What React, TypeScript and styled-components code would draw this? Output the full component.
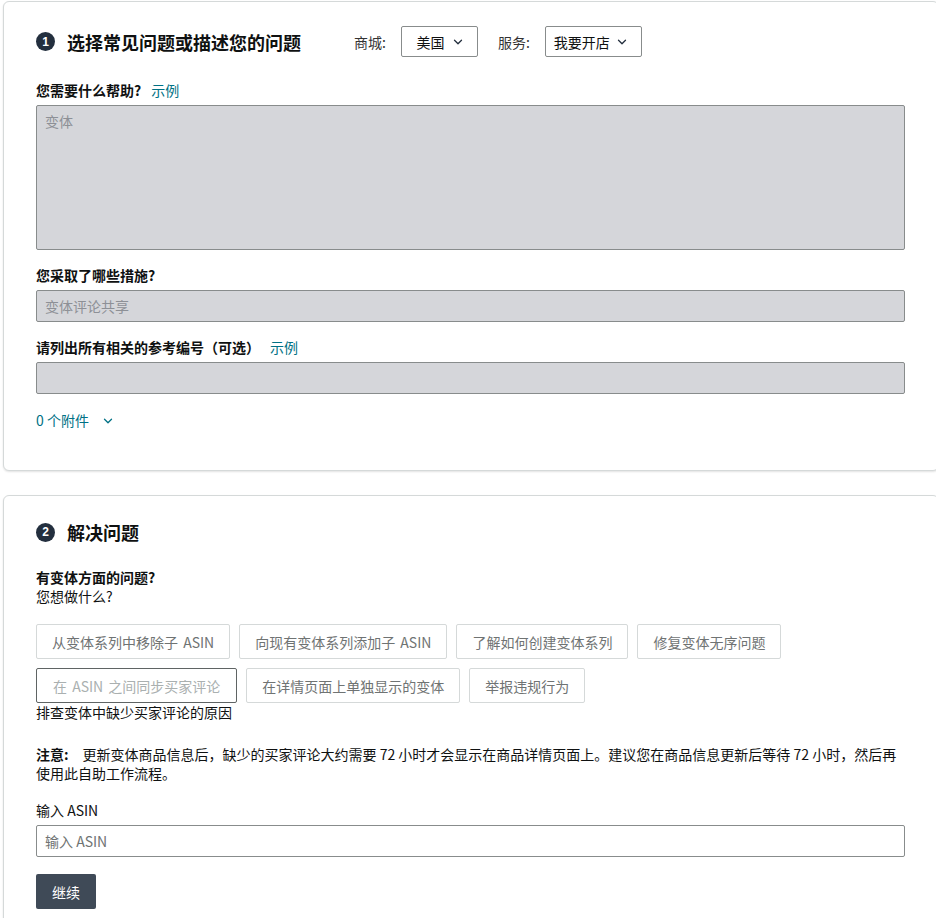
import React, { useState } from "react";
import styled, { createGlobalStyle } from "styled-components";
import { ChevronDown } from "lucide-react";

const GlobalStyle = createGlobalStyle`
  html, body {
    margin: 0;
    padding: 0;
    background: #fff;
    overflow: hidden;
  }
  body {
    font-family: "Noto Sans CJK SC", "Liberation Sans", Arial, sans-serif;
    font-size: 14px;
    color: #0f1111;
  }
`;

const Page = styled.div`
  width: 936px;
  padding: 1px 0 0 3px;
  display: flex;
  flex-direction: column;
  gap: 24px;
`;

const Card = styled.section<{ $pb: number }>`
  width: 936px;
  box-sizing: border-box;
  border: 1px solid #d5d9d9;
  border-radius: 6px;
  box-shadow: 0 1px 2px rgba(15, 17, 17, 0.12);
  padding: 24px 33px ${(p) => p.$pb}px 32px;
  background: #fff;
`;

const HeaderRow = styled.div`
  display: flex;
  align-items: center;
  min-height: 24px;
`;

const Badge = styled.span`
  width: 19px;
  height: 19px;
  border-radius: 50%;
  background: #232f3e;
  color: #fff;
  font-family: "Liberation Sans", Arial, sans-serif;
  font-weight: 700;
  font-size: 12px;
  display: flex;
  align-items: center;
  justify-content: center;
  margin-right: 12px;
`;

const Title = styled.h2`
  margin: 0;
  font-size: 18px;
  font-weight: 700;
  color: #0f1111;
  line-height: 24px;
`;

const Filters = styled.div`
  display: flex;
  align-items: center;
  margin-left: 53px;
  gap: 20px;
`;

const Filter = styled.div`
  display: flex;
  align-items: center;
  gap: 15px;
  font-size: 14px;
  color: #333;
`;

const SelectBox = styled.div<{ $w: number }>`
  width: ${(p) => p.$w}px;
  height: 31px;
  box-sizing: border-box;
  border: 1px solid #888c8c;
  border-radius: 2px;
  display: flex;
  align-items: center;
  justify-content: space-between;
  padding: 0 12px 0 8px;
  font-size: 14px;
  color: #0f1111;
  svg {
    color: #232f3e;
  }
`;

const SelectText = styled.span<{ $center?: boolean }>`
  flex: 1;
  text-align: ${(p) => (p.$center ? "center" : "left")};
`;

const Label = styled.div<{ $mt: number }>`
  margin-top: ${(p) => p.$mt}px;
  font-size: 14px;
  font-weight: 700;
  line-height: 19px;
  color: #0f1111;
`;

const Link = styled.a`
  margin-left: 10px;
  font-weight: 400;
  color: #007185;
  text-decoration: none;
`;

const GrayField = styled.div<{ $h: number }>`
  margin-top: 5px;
  height: ${(p) => p.$h}px;
  box-sizing: border-box;
  background: #d5d6da;
  border: 1px solid #888c8c;
  border-radius: 2px;
  padding: 6px 8px;
  font-size: 14px;
  line-height: 18px;
  color: #8d9096;
`;

const Attachments = styled.div`
  margin-top: 17px;
  display: flex;
  align-items: center;
  gap: 12px;
  color: #007185;
  line-height: 19px;
`;

const Question = styled.div`
  margin-top: 24px;
  line-height: 19px;
  strong {
    display: block;
    font-weight: 700;
  }
`;

const Options = styled.div`
  margin-top: 18px;
  display: flex;
  flex-wrap: wrap;
  gap: 9px 9px;
  width: 760px;
`;

const Option = styled.button<{ $active?: boolean }>`
  height: 35px;
  padding: 0 ${(p) => (p.$active ? 16 : 15)}px;
  background: #fff;
  border: 1px solid ${(p) => (p.$active ? "#5f6464" : "#d5d9d9")};
  border-radius: 2px;
  font-family: inherit;
  font-size: 14px;
  word-spacing: 2px;
  color: ${(p) => (p.$active ? "#aab0b0" : "#6f7373")};
  cursor: pointer;
`;

const Caption = styled.div`
  line-height: 19px;
  color: #0f1111;
`;

const Notice = styled.p`
  margin: 23px 0 0;
  line-height: 19px;
  color: #0f1111;
  strong {
    font-weight: 700;
    margin-right: 14px;
  }
`;

const PlainLabel = styled.div`
  margin-top: 18px;
  line-height: 19px;
`;

const TextInput = styled.input`
  display: block;
  margin-top: 5px;
  width: 100%;
  height: 32px;
  box-sizing: border-box;
  border: 1px solid #888c8c;
  border-radius: 2px;
  padding: 0 8px;
  font-family: inherit;
  font-size: 14px;
  color: #0f1111;
  &::placeholder {
    color: #6f7373;
  }
`;

const Submit = styled.button`
  margin-top: 17px;
  height: 35px;
  padding: 0 16px;
  background: #3f4a57;
  border: none;
  border-radius: 2px;
  color: #fff;
  font-family: inherit;
  font-size: 14px;
  cursor: pointer;
`;

const options = [
  "从变体系列中移除子 ASIN",
  "向现有变体系列添加子 ASIN",
  "了解如何创建变体系列",
  "修复变体无序问题",
  "在 ASIN 之间同步买家评论",
  "在详情页面上单独显示的变体",
  "举报违规行为",
];

export default function App() {
  const [active, setActive] = useState(4);
  const [asin, setAsin] = useState("");

  return (
    <>
      <GlobalStyle />
      <Page>
        <Card $pb={40}>
          <HeaderRow>
            <Badge>1</Badge>
            <Title>选择常见问题或描述您的问题</Title>
            <Filters>
              <Filter>
                商城:
                <SelectBox $w={77}>
                  <SelectText $center>美国</SelectText>
                  <ChevronDown size={14} strokeWidth={2.2} />
                </SelectBox>
              </Filter>
              <Filter>
                服务:
                <SelectBox $w={97}>
                  <SelectText>我要开店</SelectText>
                  <ChevronDown size={14} strokeWidth={2.2} />
                </SelectBox>
              </Filter>
            </Filters>
          </HeaderRow>

          <Label $mt={24}>
            您需要什么帮助?<Link href="#">示例</Link>
          </Label>
          <GrayField $h={145}>变体</GrayField>

          <Label $mt={16}>您采取了哪些措施?</Label>
          <GrayField $h={32}>变体评论共享</GrayField>

          <Label $mt={16}>
            请列出所有相关的参考编号（可选）<Link href="#">示例</Link>
          </Label>
          <GrayField $h={32} />

          <Attachments>
            0 个附件
            <ChevronDown size={14} strokeWidth={2.2} />
          </Attachments>
        </Card>

        <Card $pb={40}>
          <HeaderRow>
            <Badge>2</Badge>
            <Title>解决问题</Title>
          </HeaderRow>

          <Question>
            <strong>有变体方面的问题?</strong>
            您想做什么?
          </Question>

          <Options>
            {options.map((o, i) => (
              <Option key={o} $active={i === active} onClick={() => setActive(i)}>
                {o}
              </Option>
            ))}
          </Options>
          <Caption>排查变体中缺少买家评论的原因</Caption>

          <Notice>
            <strong>注意:</strong>
            更新变体商品信息后，缺少的买家评论大约需要 72 小时才会显示在商品详情页面上。建议您在商品信息更新后等待 72 小时，然后再使用此自助工作流程。
          </Notice>

          <PlainLabel>输入 ASIN</PlainLabel>
          <TextInput
            placeholder="输入 ASIN"
            value={asin}
            onChange={(e) => setAsin(e.target.value)}
          />

          <Submit>继续</Submit>
        </Card>
      </Page>
    </>
  );
}
